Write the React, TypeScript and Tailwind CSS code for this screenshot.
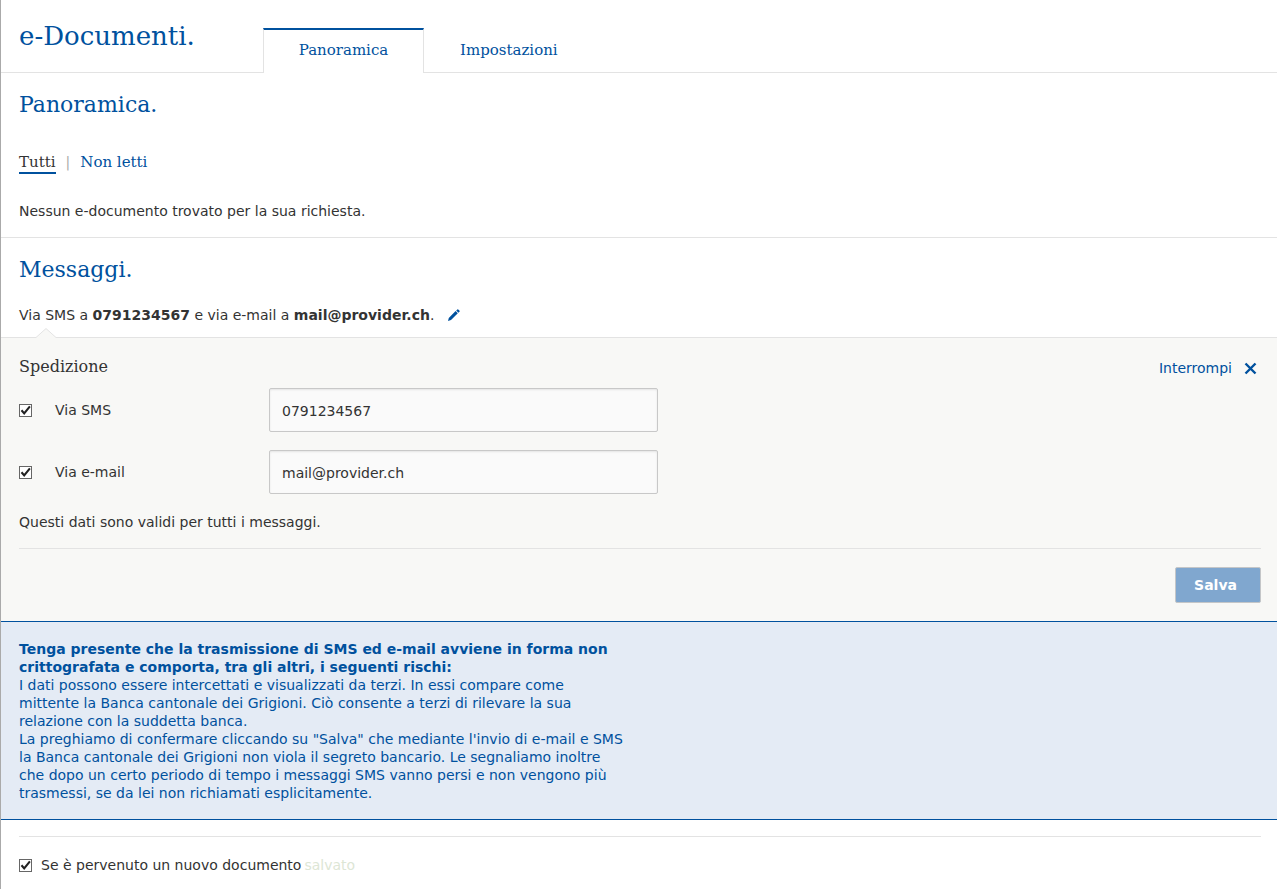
import { useState } from 'react'
import type { ReactNode } from 'react'

interface CheckboxProps {
  id: string
  checked: boolean
  onChange: (checked: boolean) => void
}

function Checkbox({ id, checked, onChange }: CheckboxProps) {
  return (
    <span className="grid h-[13px] w-[13px] shrink-0">
      <input
        id={id}
        type="checkbox"
        checked={checked}
        onChange={(e) => onChange(e.target.checked)}
        className="col-start-1 row-start-1 h-[13px] w-[13px] appearance-none border border-[#666] bg-white"
      />
      {checked && (
        <svg viewBox="0 0 13 13" className="pointer-events-none col-start-1 row-start-1 h-[13px] w-[13px]" aria-hidden="true">
          <path d="M2.5 6.2 L5.2 9.4 L10.9 2.4" fill="none" stroke="#222" strokeWidth="2.1" />
        </svg>
      )}
    </span>
  )
}

interface ChannelRowProps {
  id: string
  label: string
  type: string
  value: string
  onValueChange: (value: string) => void
}

function ChannelRow({ id, label, type, value, onValueChange }: ChannelRowProps) {
  const [enabled, setEnabled] = useState(true)

  return (
    <div className="flex items-center">
      <div className="flex w-[250px] items-center">
        <Checkbox id={`${id}-enabled`} checked={enabled} onChange={setEnabled} />
        <label htmlFor={`${id}-enabled`} className="pl-[23px]">
          {label}
        </label>
      </div>
      <input
        type={type}
        aria-label={label}
        value={value}
        onChange={(e) => onValueChange(e.target.value)}
        className="h-11 w-full max-w-[389px] rounded-xs border border-[#c8c8c8] bg-[#fafafa] px-3 pt-[2px] shadow-[inset_0_1px_2px_#e4e4e4] outline-none"
      />
    </div>
  )
}

function SectionTitle({ children }: { children: ReactNode }) {
  return <h2 className="font-[DejaVu_Serif,serif] text-[22px] leading-8 text-[#00519e]">{children}</h2>
}

export default function App() {
  const [phone, setPhone] = useState('0791234567')
  const [email, setEmail] = useState('mail@provider.ch')
  const [notify, setNotify] = useState(true)

  return (
    <div className="min-h-screen border-l border-[#aaa] bg-white font-[DejaVu_Sans,Verdana,sans-serif] text-[14px] leading-5 text-[#333]">
      <header className="flex h-[73px] items-end border-b border-[#e3e3e3] font-[DejaVu_Serif,serif] text-[#00519e]">
        <h1 className="w-[262px] self-start pt-4 pl-[18px] text-[26px] leading-10">e-Documenti.</h1>
        <nav className="-mb-px flex text-[15px]">
          <a href="#panoramica" className="flex h-[45px] w-[161px] items-center justify-center border-x border-t-2 border-x-[#e3e3e3] border-t-[#00519e] bg-white pb-1">
            Panoramica
          </a>
          <a href="#impostazioni" className="flex h-[45px] items-center px-9 pb-[2px]">
            Impostazioni
          </a>
        </nav>
      </header>

      <main>
        <section className="border-b border-[#e3e3e3] px-[18px] py-4">
          <SectionTitle>Panoramica.</SectionTitle>
          <div className="mt-8 flex font-[DejaVu_Serif,serif] text-[15px] leading-[19px]">
            <a href="#tutti" className="border-b-2 border-[#00519e]">
              Tutti
            </a>
            <span className="px-[10px] font-[DejaVu_Sans,sans-serif] text-[14px] text-[#aaa]">|</span>
            <a href="#non-letti" className="text-[#00519e]">
              Non letti
            </a>
          </div>
          <p className="mt-[27px]">Nessun e-documento trovato per la sua richiesta.</p>
        </section>

        <section className="px-[18px] pt-4 pb-3">
          <SectionTitle>Messaggi.</SectionTitle>
          <div className="mt-[19px] flex items-center">
            <p>
              Via SMS a <b>{phone}</b> e via e-mail a <b>{email}</b>.
            </p>
            <button type="button" aria-label="Modifica" className="ml-3.5">
              <svg viewBox="0 0 12 12" className="h-3 w-3" fill="#00519e">
                <path d="M0 12 L.8 8.9 L7.6 2.1 L9.8 4.3 L3 11.1 Z M8.2 1.6 L9.4 .4 Q9.8 0 10.2 .4 L11.6 1.8 Q12 2.2 11.6 2.6 L10.4 3.8 Z" />
              </svg>
            </button>
          </div>
        </section>

        <form className="relative border-t border-[#e3e3e3] bg-[#f8f8f6] px-[18px] pt-[17px] pb-[18px]" onSubmit={(e) => e.preventDefault()}>
          <svg viewBox="0 0 20 11" className="absolute -top-[10px] left-[35px] h-[11px] w-5" aria-hidden="true">
            <path d="M0 11 L0 9.5 L10 .5 L20 9.5 L20 11 Z" fill="#f8f8f6" />
            <path d="M0 9.5 L10 .5 L20 9.5" fill="none" stroke="#e3e3e3" />
          </svg>
          <div className="flex items-end justify-between">
            <h3 className="font-[DejaVu_Serif,serif] text-[16px] leading-6">Spedizione</h3>
            <button type="button" className="flex items-center gap-3 pr-[2px] pb-px text-[#00519e]">
              Interrompi
              <svg viewBox="0 0 13 13" className="h-[13px] w-[13px]" fill="none" stroke="#00519e" strokeWidth="2.4" aria-hidden="true">
                <path d="M1.5 1.5 L11.5 11.5 M11.5 1.5 L1.5 11.5" />
              </svg>
            </button>
          </div>
          <div className="mt-[9px] flex flex-col gap-[18px]">
            <ChannelRow id="sms" label="Via SMS" type="tel" value={phone} onValueChange={setPhone} />
            <ChannelRow id="email" label="Via e-mail" type="email" value={email} onValueChange={setEmail} />
          </div>
          <p className="mt-[18px]">Questi dati sono validi per tutti i messaggi.</p>
          <div className="mt-4 mr-[-2px] flex justify-end border-t border-[#e3e3e3] pt-[18px]">
            <button type="submit" className="h-9 rounded-xs border border-[#c4c6c8] bg-[#80a7cf] pr-[23px] pl-[18px] font-bold text-white">
              Salva
            </button>
          </div>
        </form>

        <section className="border-y border-[#00519e] bg-[#e4ebf5] px-[18px] pt-[18px] pb-[17px] leading-[18px] text-[#00519e]">
          <p className="font-bold">
            Tenga presente che la trasmissione di SMS ed e-mail avviene in forma non
            <br />
            crittografata e comporta, tra gli altri, i seguenti rischi:
          </p>
          <p>
            I dati possono essere intercettati e visualizzati da terzi. In essi compare come
            <br />
            mittente la Banca cantonale dei Grigioni. Ciò consente a terzi di rilevare la sua
            <br />
            relazione con la suddetta banca.
          </p>
          <p>
            La preghiamo di confermare cliccando su "Salva" che mediante l'invio di e-mail e SMS
            <br />
            la Banca cantonale dei Grigioni non viola il segreto bancario. Le segnaliamo inoltre
            <br />
            che dopo un certo periodo di tempo i messaggi SMS vanno persi e non vengono più
            <br />
            trasmessi, se da lei non richiamati esplicitamente.
          </p>
        </section>

        <div className="mx-4 mt-4 ml-[18px] flex items-center border-t border-[#e3e3e3] pt-[18px]">
          <Checkbox id="notify" checked={notify} onChange={setNotify} />
          <label htmlFor="notify" className="pl-[9px]">
            Se è pervenuto un nuovo documento
          </label>
          <span className="pl-[3px] text-[#dde6d5]">salvato</span>
        </div>
      </main>
    </div>
  )
}
